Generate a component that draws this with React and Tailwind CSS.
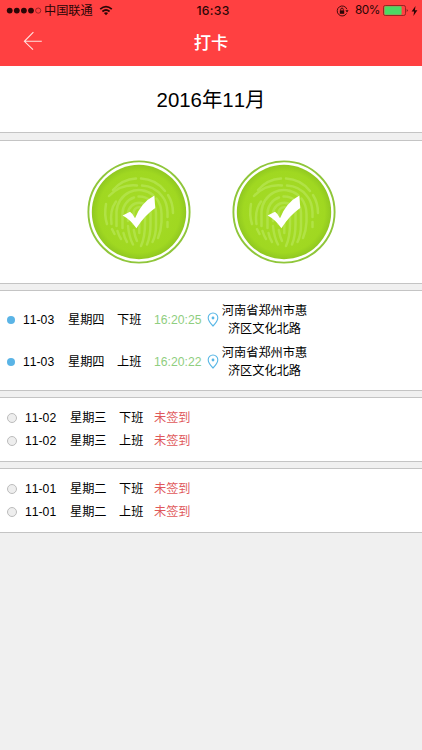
const holidays = [
  { date: '11-02', week: '星期三', types: ['下班', '上班'] },
  { date: '11-01', week: '星期二', types: ['下班', '上班'] },
]

const records = [
  { date: '11-03', week: '星期四', type: '下班', time: '16:20:25' },
  { date: '11-03', week: '星期四', type: '上班', time: '16:20:22' },
]

const ridges = [
  'M22 36A34 34 0 0 1 50 25.500',
  'M26 30A33 33 0 0 1 49 18.500',
  'M54 18.500A33 33 0 0 1 78 31',
  'M55 25.500A27 27 0 0 1 75 36Q80 42 80.500 52V57',
  'M81 35Q86 43 86 53',
  'M19 44Q17 55 20 64',
  'M24.500 64Q22.500 50 29 41.500',
  'M29.500 66V52A22.500 22.500 0 0 1 66 35',
  'M69.500 38.500Q74.500 45 74.500 54V62Q74 71 71 78',
  'M25 69L27.500 74',
  'M30.500 71Q32 76 34 79',
  'M35.500 68V53A16.700 16.700 0 0 1 47 37.500',
  'M51.500 36.500A16.700 16.700 0 0 1 69 53V65Q69 75 65.500 82',
  'M36.500 73Q37.500 78 40 82',
  'M41 61V53A11.300 11.300 0 0 1 63.500 53V64Q63.500 76 60 84.500',
  'M41 66Q42 77 46 84.500',
  'M46.500 64V53A5.700 5.700 0 0 1 58 53V64Q58 77 54 86',
  'M46.800 70Q48 77 50 81',
  'M52.300 53V73',
  'M80.500 62V67',
]

function StatusBar() {
  return (
    <div className="relative flex h-[21px] items-center text-[12px] text-[#2b0606]">
      <svg viewBox="0 0 36 8" className="ml-[6px] h-2 w-9 shrink-0">
        {[3.7, 10.8, 17.9, 25].map((x) => (
          <circle key={x} cx={x} cy="3.6" r="2.9" fill="#2b0606" />
        ))}
        <circle cx="32.2" cy="3.6" r="2.6" fill="none" stroke="#5a1313" strokeWidth=".6" />
      </svg>
      <span className="ml-[2px] w-[50px] pt-[2px] whitespace-nowrap text-[12.2px]">中国联通</span>
      <svg viewBox="0 0 14 11" className="ml-[5px] h-[11px] w-[14px]" fill="none" stroke="#2b0606" strokeWidth="1.7">
        <path d="M1.2 4.1Q7-1 12.8 4.1M3.4 6.5Q7 3.5 10.6 6.5" />
        <path d="M7 10.2L4.9 8.1Q7 6.6 9.1 8.1Z" fill="#2b0606" stroke="none" />
      </svg>
      <span className="absolute top-[2px] left-1/2 ml-[2px] -translate-x-1/2 font-['Inter'] text-[12.2px] font-medium tracking-[.3px]">16:33</span>
      <div className="ml-auto flex items-center pr-[4px]">
        <svg viewBox="0 0 13 12" className="h-3 w-[13px]" fill="none" stroke="#2b0606" strokeWidth=".9">
          <path d="M10.9 4.2A5 5 0 1 0 10.6 8.4" />
          <path d="M9.4 5.2h3.2L11 7.4z" fill="#2b0606" stroke="none" />
          <rect x="3.8" y="5.4" width="4.4" height="3.4" fill="#2b0606" stroke="none" />
          <path d="M4.7 5.6V4.4a1.3 1.3 0 0 1 2.6 0v1.2" />
        </svg>
        <span className="ml-[6px] w-[25px] pt-px font-['Inter'] text-[11.8px] tracking-[-.5px]">80%</span>
        <svg viewBox="0 0 26 11" className="ml-[3px] h-[11px] w-[26px]">
          <rect x=".5" y=".5" width="22" height="10" rx="1.8" fill="none" stroke="#7a201c" strokeWidth=".8" />
          <rect x="1.4" y="1.3" width="17.2" height="8.4" rx=".8" fill="#4cd964" />
          <path d="M23.8 3.7q1.7 1.8 0 3.6z" fill="#2b0606" />
        </svg>
        <svg viewBox="0 0 7 10" className="ml-[2px] h-[10px] w-[7px]">
          <path d="M4.5 0L.6 5.6h2.5L2.4 10l4-5.8H3.9z" fill="#2b0606" />
        </svg>
      </div>
    </div>
  )
}

function NavBar() {
  return (
    <div className="relative flex h-[45px] items-center justify-center">
      <svg viewBox="0 0 20 20" className="absolute top-[10px] left-[23px] h-5 w-5" fill="none" stroke="#ffe3e0" strokeWidth="1.1">
        <path d="M18.8 10.3H1.4M10.4 1.2L1.4 10.3l8.6 8.4" />
      </svg>
      <h1 className="text-[17.3px] leading-none font-medium text-white">打卡</h1>
    </div>
  )
}

function PunchButton({ id }) {
  return (
    <svg viewBox="0 0 104 104" className="h-[104px] w-[104px]">
      <defs>
        <radialGradient id={id}>
          <stop offset="0" stopColor="#a6dc28" />
          <stop offset=".86" stopColor="#a0d821" />
          <stop offset="1" stopColor="#90c820" />
        </radialGradient>
      </defs>
      <circle cx="52" cy="52" r="50.6" fill="#fff" stroke="#8fc63a" strokeWidth="1.9" />
      <circle cx="52" cy="52" r="47.2" fill={`url(#${id})`} />
      <g fill="none" stroke="#b1e246" strokeWidth="2.5" strokeLinecap="round">
        {ridges.map((d) => (
          <path key={d} d={d} />
        ))}
      </g>
      <path d="M35.6 55.4L43 51.8q3 2 5 6.400Q54 42.5 67.4 35.4L68.2 48Q57.5 55.5 49.4 68.2Q43.5 59.5 35.6 55.4z" fill="#fff" />
    </svg>
  )
}

function Pin() {
  return (
    <svg viewBox="0 0 12 15" className="mb-px h-[15px] w-3" fill="none" stroke="#58b7e6" strokeWidth="1.1">
      <path d="M6 14Q1.2 9.2 1.2 5.8a4.8 4.8 0 0 1 9.6 0Q10.8 9.2 6 14z" />
      <circle cx="6" cy="6" r="1.4" fill="#58b7e6" stroke="none" />
    </svg>
  )
}

export default function App() {
  return (
    <div className="flex min-h-[750px] w-[422px] flex-col bg-[#f0f0f0] font-['Liberation_Sans','Noto_Sans_CJK_SC',sans-serif] text-[12.2px] text-black [font-kerning:none]">
      <header className="h-[66px] bg-[#ff4041]">
        <StatusBar />
        <NavBar />
      </header>

      <section className="flex h-[67px] items-center justify-center border-b border-[#c4c4c4] bg-white pt-[2px] text-[20.4px]">
        2016年11月
      </section>

      <section className="mt-[7px] flex h-[144px] justify-center gap-[41px] border-y border-[#c4c4c4] bg-white pt-[19px]">
        <PunchButton id="on" />
        <PunchButton id="off" />
      </section>

      <section className="mt-[6px] h-[101px] border-y border-[#c4c4c4] bg-white pt-2">
        {records.map((r) => (
          <div key={r.time} className="flex h-[42px] items-center whitespace-nowrap">
            <i className="ml-[7px] h-2 w-2 rounded-full bg-[#5ab4e6]" />
            <span className="ml-[8px] w-[45px]">{r.date}</span>
            <span className="w-[49px]">{r.week}</span>
            <span className="w-[37px]">{r.type}</span>
            <span className="w-[53px] text-[#8fce80]">{r.time}</span>
            <Pin />
            <p className="ml-[2px] w-[87px] text-center leading-[18px]">
              河南省郑州市惠
              <br />
              济区文化北路
            </p>
          </div>
        ))}
      </section>

      {holidays.map((h) => (
        <section key={h.date} className="mt-[6px] flex h-[65px] flex-col justify-center border-y border-[#c4c4c4] bg-white">
          {h.types.map((type) => (
            <div key={type} className="flex h-[23px] items-center whitespace-nowrap">
              <i className="ml-[7px] h-[10px] w-[10px] rounded-full border border-[#bcbcbc] bg-[#eee]" />
              <span className="ml-[8px] w-[45px]">{h.date}</span>
              <span className="w-[49px]">{h.week}</span>
              <span className="w-[35px]">{type}</span>
              <span className="text-[#e0585a]">未签到</span>
            </div>
          ))}
        </section>
      ))}
    </div>
  )
}
